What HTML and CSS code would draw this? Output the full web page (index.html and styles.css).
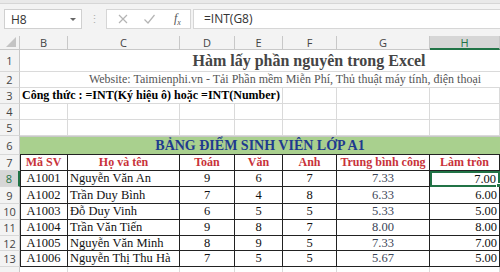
FILE: index.html
```html
<!DOCTYPE html>
<html lang="vi">
<head>
    <meta charset="UTF-8">
    <title>Hàm lấy phần nguyên trong Excel</title>
    <link rel="stylesheet" href="styles.css">
</head>
<body>
    <div class="ribbon"></div>

    <!-- Formula bar -->
    <div class="formula-bar">
        <div class="name-box">
            <span>H8</span>
            <span class="arrow"></span>
        </div>
        <div class="grip">⋮</div>
        <div class="fx-buttons">
            <svg width="12" height="12" viewBox="0 0 12 12"><path d="M2 2 L10 10 M10 2 L2 10" stroke="#b4b4b4" stroke-width="1.2" fill="none"/></svg>
            <svg width="13" height="12" viewBox="0 0 13 12"><path d="M1.5 6.5 L5 10 L11.5 2" stroke="#b4b4b4" stroke-width="1.2" fill="none"/></svg>
            <span class="fx">f<sub>x</sub></span>
        </div>
        <div class="formula-input">=INT(G8)</div>
    </div>

    <!-- Sheet grid -->
    <div class="sheet">
        <div class="corner"><span class="tri"></span></div>
        <div class="ch">B</div>
        <div class="ch">C</div>
        <div class="ch">D</div>
        <div class="ch">E</div>
        <div class="ch">F</div>
        <div class="ch">G</div>
        <div class="ch active">H</div>

        <div class="rh">1</div>
        <div class="c span-all title">Hàm lấy phần nguyên trong Excel</div>

        <div class="rh">2</div>
        <div class="c span-all website">Website: Taimienphi.vn - Tải Phần mềm Miễn Phí, Thủ thuật máy tính, điện thoại</div>

        <div class="rh">3</div>
        <div class="c span-be formula">Công thức : =INT(Ký hiệu ô) hoặc =INT(Number)</div>
        <div class="c"></div><div class="c"></div><div class="c"></div>

        <div class="rh">4</div>
        <div class="c"></div><div class="c"></div><div class="c"></div><div class="c"></div><div class="c"></div><div class="c"></div><div class="c"></div>

        <div class="rh">5</div>
        <div class="c"></div><div class="c"></div><div class="c"></div><div class="c"></div><div class="c"></div><div class="c"></div><div class="c"></div>

        <div class="rh">6</div>
        <div class="c span-all banner">BẢNG ĐIỂM SINH VIÊN LỚP A1</div>

        <div class="rh">7</div>
        <div class="t head">Mã SV</div>
        <div class="t head">Họ và tên</div>
        <div class="t head">Toán</div>
        <div class="t head">Văn</div>
        <div class="t head">Anh</div>
        <div class="t head">Trung bình công</div>
        <div class="t head">Làm tròn</div>

        <div class="rh active">8</div>
        <div class="t">A1001</div><div class="t name">Nguyễn Văn An</div>
        <div class="t">9</div><div class="t">6</div><div class="t">7</div>
        <div class="t avg">7.33</div><div class="t num selected">7.00<span class="handle"></span></div>

        <div class="rh">9</div>
        <div class="t">A1002</div><div class="t name">Trần Duy Bình</div>
        <div class="t">7</div><div class="t">4</div><div class="t">8</div>
        <div class="t avg">6.33</div><div class="t num">6.00</div>

        <div class="rh">10</div>
        <div class="t">A1003</div><div class="t name">Đỗ Duy Vinh</div>
        <div class="t">6</div><div class="t">5</div><div class="t">5</div>
        <div class="t avg">5.33</div><div class="t num">5.00</div>

        <div class="rh">11</div>
        <div class="t">A1004</div><div class="t name">Trần Văn Tiến</div>
        <div class="t">9</div><div class="t">8</div><div class="t">7</div>
        <div class="t avg">8.00</div><div class="t num">8.00</div>

        <div class="rh">12</div>
        <div class="t">A1005</div><div class="t name">Nguyễn Văn Minh</div>
        <div class="t">8</div><div class="t">9</div><div class="t">5</div>
        <div class="t avg">7.33</div><div class="t num">7.00</div>

        <div class="rh">13</div>
        <div class="t">A1006</div><div class="t name">Nguyễn Thị Thu Hà</div>
        <div class="t">7</div><div class="t">5</div><div class="t">5</div>
        <div class="t avg">5.67</div><div class="t num">5.00</div>

        <div class="rh"></div>
        <div class="c"></div><div class="c"></div><div class="c"></div><div class="c"></div><div class="c"></div><div class="c"></div><div class="c"></div>
    </div>
</body>
</html>
```

FILE: styles.css
```css
/* Basic Reset */
* {
    margin: 0;
    padding: 0;
    box-sizing: border-box;
}

body {
    width: 500px;
    height: 272px;
    overflow: hidden;
    background-color: #fff;
    font-family: "Liberation Serif", "Times New Roman", serif;
}

/* Ribbon edge */
.ribbon {
    height: 4px;
    background-color: #e9e9e9;
    border-bottom: 1px solid #d6d6d6;
}

/* Formula Bar */
.formula-bar {
    height: 32px;
    display: flex;
    align-items: flex-start;
    padding-top: 5px;
    padding-left: 4px;
    background-color: #f3f3f3;
    font-family: "Open Sans", "Liberation Sans", sans-serif;
    font-size: 12px;
    color: #333;
}

.name-box {
    width: 78px;
    height: 20px;
    display: flex;
    align-items: center;
    justify-content: space-between;
    padding: 0 5px 0 6px;
    background-color: #fff;
    border: 1px solid #d0d0d0;
}

.name-box .arrow {
    width: 0;
    height: 0;
    border-left: 3px solid transparent;
    border-right: 3px solid transparent;
    border-top: 3px solid #666;
}

.grip {
    width: 24px;
    height: 20px;
    line-height: 20px;
    text-align: center;
    color: #b0b0b0;
    font-size: 11px;
}

.fx-buttons {
    width: 85px;
    height: 20px;
    display: flex;
    align-items: center;
    gap: 14px;
    padding-left: 10px;
    background-color: #fff;
    border: 1px solid #d6d6d6;
}

.fx {
    font-family: "Liberation Serif", serif;
    font-style: italic;
    font-size: 12px;
    color: #555;
    margin-left: 4px;
}

.fx sub {
    font-size: 8px;
}

.formula-input {
    flex: 1;
    height: 20px;
    line-height: 18px;
    margin-left: 2px;
    padding-left: 10px;
    background-color: #fff;
    border: 1px solid #d6d6d6;
    border-right: none;
}

/* Sheet Grid */
.sheet {
    display: grid;
    grid-template-columns: 20px 48px 112px 55px 48px 54px 93px 70px;
    grid-template-rows: 14px 22px 16px 16px 16px 16px 19px 16px 16px 17px 16px 16px 15px 16px 16px;
    font-size: 12.5px;
    color: #111;
}

/* Headers */
.corner,
.ch,
.rh {
    background-color: #f3f3f3;
    font-family: "Open Sans", "Liberation Sans", sans-serif;
    font-size: 11px;
    color: #444;
    display: flex;
    align-items: center;
    justify-content: center;
}

.corner {
    border-right: 1px solid #c8c8c8;
    border-bottom: 1px solid #c8c8c8;
    justify-content: flex-end;
    align-items: flex-end;
    padding: 0 3px 2px 0;
}

.corner .tri {
    width: 0;
    height: 0;
    border-left: 10px solid transparent;
    border-bottom: 10px solid #c4c4c4;
}

.ch {
    border-right: 1px solid #c8c8c8;
    border-bottom: 1px solid #c8c8c8;
}

.ch.active {
    background-color: #d6d6d6;
    color: #217346;
    border-bottom: 2px solid #217346;
}

.rh {
    border-right: 1px solid #c8c8c8;
    border-bottom: 1px solid #d8d8d8;
}

.rh.active {
    background-color: #d6d6d6;
    color: #217346;
    border-right: 2px solid #217346;
}

/* Plain cells */
.c {
    border-right: 1px solid #dadada;
    border-bottom: 1px solid #dadada;
    display: flex;
    align-items: center;
    white-space: nowrap;
}

.span-all {
    grid-column: 2 / 9;
}

.span-be {
    grid-column: 2 / 6;
}

.title {
    justify-content: center;
    padding-left: 98px;
    font-size: 16px;
    font-weight: bold;
    color: #454545;
    border-right: none;
}

.website {
    justify-content: center;
    padding-left: 50px;
    font-size: 12px;
    color: #555;
    border-right: none;
}

.formula {
    padding-left: 2px;
    font-size: 12px;
    font-weight: bold;
    color: #000;
}

.banner {
    justify-content: center;
    background-color: #a9d08e;
    font-size: 14px;
    font-weight: bold;
    color: #1f3a8f;
    border-right: none;
    border-bottom: 1px solid #222;
    border-top: 1px solid #c8c8c8;
}

/* Table cells */
.t {
    border-right: 1px solid #222;
    border-bottom: 1px solid #222;
    display: flex;
    align-items: center;
    justify-content: center;
    white-space: nowrap;
    position: relative;
}

.rh + .t {
    box-shadow: inset 1px 0 0 #222;
}

.t.head {
    font-size: 12px;
    font-weight: bold;
    color: #c8323a;
}

.t.name {
    justify-content: flex-start;
    padding-left: 2px;
}

.t.avg {
    color: #3c4658;
}

.t.num {
    justify-content: flex-end;
    padding-right: 2px;
}

.t.selected {
    border: 2px solid #217346;
}

.t.selected .handle {
    position: absolute;
    right: -3px;
    bottom: -3px;
    width: 5px;
    height: 5px;
    background-color: #217346;
    border: 1px solid #fff;
}
```
